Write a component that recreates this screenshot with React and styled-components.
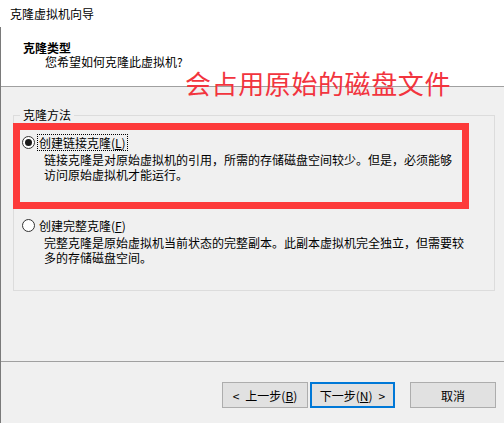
import React from 'react';
import styled, { createGlobalStyle } from 'styled-components';

const GlobalStyle = createGlobalStyle`
  html, body {
    margin: 0;
    padding: 0;
    background: #f0f0f0;
  }
  * {
    box-sizing: border-box;
  }
`;

const Window = styled.div`
  position: relative;
  width: 504px;
  height: 423px;
  overflow: hidden;
  background: #f0f0f0;
  font-family: "Noto Sans CJK SC", "Liberation Sans", sans-serif;
  font-size: 12px;
  color: #000;
`;

const TitleBar = styled.div`
  height: 27px;
  line-height: 27px;
  padding-left: 10px;
  background: #fff;
`;

const Frame = styled.div`
  border-left: 1px solid #7a7a7a;
  height: 396px;
  display: flex;
  flex-direction: column;
`;

const Header = styled.div`
  height: 60px;
  background: #fff;
  border-bottom: 1px solid #a0a0a0;
  padding-top: 14px;
`;

const Heading = styled.div`
  font-weight: bold;
  line-height: 14px;
  padding-left: 22px;
`;

const SubHeading = styled.div`
  line-height: 14px;
  padding-left: 44px;
`;

const Body = styled.div`
  flex: 1;
  padding: 28px 9px 0 12px;
`;

const GroupBox = styled.div`
  position: relative;
  height: 176px;
  border: 1px solid #dcdcdc;
  padding: 18px 8px 0 8px;
`;

const GroupLabel = styled.span`
  position: absolute;
  top: -9px;
  left: 6px;
  padding: 0 3px;
  line-height: 16px;
  background: #f0f0f0;
`;

const Option = styled.div`
  margin-top: ${({ $gap }) => $gap || 0}px;
`;

const OptionRow = styled.div`
  display: flex;
  align-items: center;
  height: 17px;
  gap: 2px;
`;

const Radio = styled.span`
  width: 13px;
  height: 13px;
  border-radius: 50%;
  border: 1px solid #333;
  background: #fff;
  display: flex;
  align-items: center;
  justify-content: center;
  flex-shrink: 0;
  &::after {
    content: '';
    display: ${({ $checked }) => ($checked ? 'block' : 'none')};
    width: 7px;
    height: 7px;
    border-radius: 50%;
    background: #1a1a1a;
  }
`;

const OptionLabel = styled.span`
  line-height: 15px;
  padding: 0 1px;
  border: 1px dotted ${({ $focused }) => ($focused ? '#000' : 'transparent')};
  & u {
    text-decoration: underline;
    text-underline-offset: 1px;
  }
`;

const Description = styled.div`
  margin-top: 1px;
  padding-left: 22px;
  line-height: 15px;
  width: 450px;
`;

const Footer = styled.div`
  height: 62px;
  border-top: 1px solid #a0a0a0;
  display: flex;
  justify-content: flex-end;
  align-items: flex-start;
  padding: 20px 8px 0 0;
`;

const ButtonGroup = styled.div`
  display: flex;
  gap: 2px;
  margin-right: 15px;
`;

const Button = styled.button`
  width: ${({ $w }) => $w || 86}px;
  height: 26px;
  background: #e1e1e1;
  border: ${({ $primary }) => ($primary ? '2px solid #0078d7' : '1px solid #adadad')};
  font-family: inherit;
  font-size: 12px;
  color: #000;
  padding: 0;
  display: flex;
  align-items: center;
  justify-content: center;
  gap: 6px;
  & u {
    text-underline-offset: 1px;
  }
`;

const Annotation = styled.div`
  position: absolute;
  left: 185px;
  top: 68px;
  font-size: 26px;
  line-height: 30px;
  letter-spacing: 0.6px;
  color: #f2343e;
  white-space: nowrap;
`;

const Highlight = styled.div`
  position: absolute;
  left: 13px;
  top: 123px;
  width: 456px;
  height: 86px;
  border: 7px solid #fd3a3a;
  pointer-events: none;
`;

export default function App() {
  return (
    <>
      <GlobalStyle />
      <Window>
        <TitleBar>克隆虚拟机向导</TitleBar>
        <Frame>
          <Header>
            <Heading>克隆类型</Heading>
            <SubHeading>您希望如何克隆此虚拟机?</SubHeading>
          </Header>
          <Body>
            <GroupBox>
              <GroupLabel>克隆方法</GroupLabel>
              <Option>
                <OptionRow>
                  <Radio $checked />
                  <OptionLabel $focused>
                    创建链接克隆(<u>L</u>)
                  </OptionLabel>
                </OptionRow>
                <Description>
                  链接克隆是对原始虚拟机的引用，所需的存储磁盘空间较少。但是，必须能够
                  <br />
                  访问原始虚拟机才能运行。
                </Description>
              </Option>
              <Option $gap={35}>
                <OptionRow>
                  <Radio />
                  <OptionLabel>
                    创建完整克隆(<u>F</u>)
                  </OptionLabel>
                </OptionRow>
                <Description>
                  完整克隆是原始虚拟机当前状态的完整副本。此副本虚拟机完全独立，但需要较
                  <br />
                  多的存储磁盘空间。
                </Description>
              </Option>
            </GroupBox>
          </Body>
          <Footer>
            <ButtonGroup>
              <Button>
                <span>&lt;</span>
                <span>
                  上一步(<u>B</u>)
                </span>
              </Button>
              <Button $primary $w={85}>
                <span>
                  下一步(<u>N</u>)
                </span>
                <span>&gt;</span>
              </Button>
            </ButtonGroup>
            <Button>取消</Button>
          </Footer>
        </Frame>
        <Annotation>会占用原始的磁盘文件</Annotation>
        <Highlight />
      </Window>
    </>
  );
}
